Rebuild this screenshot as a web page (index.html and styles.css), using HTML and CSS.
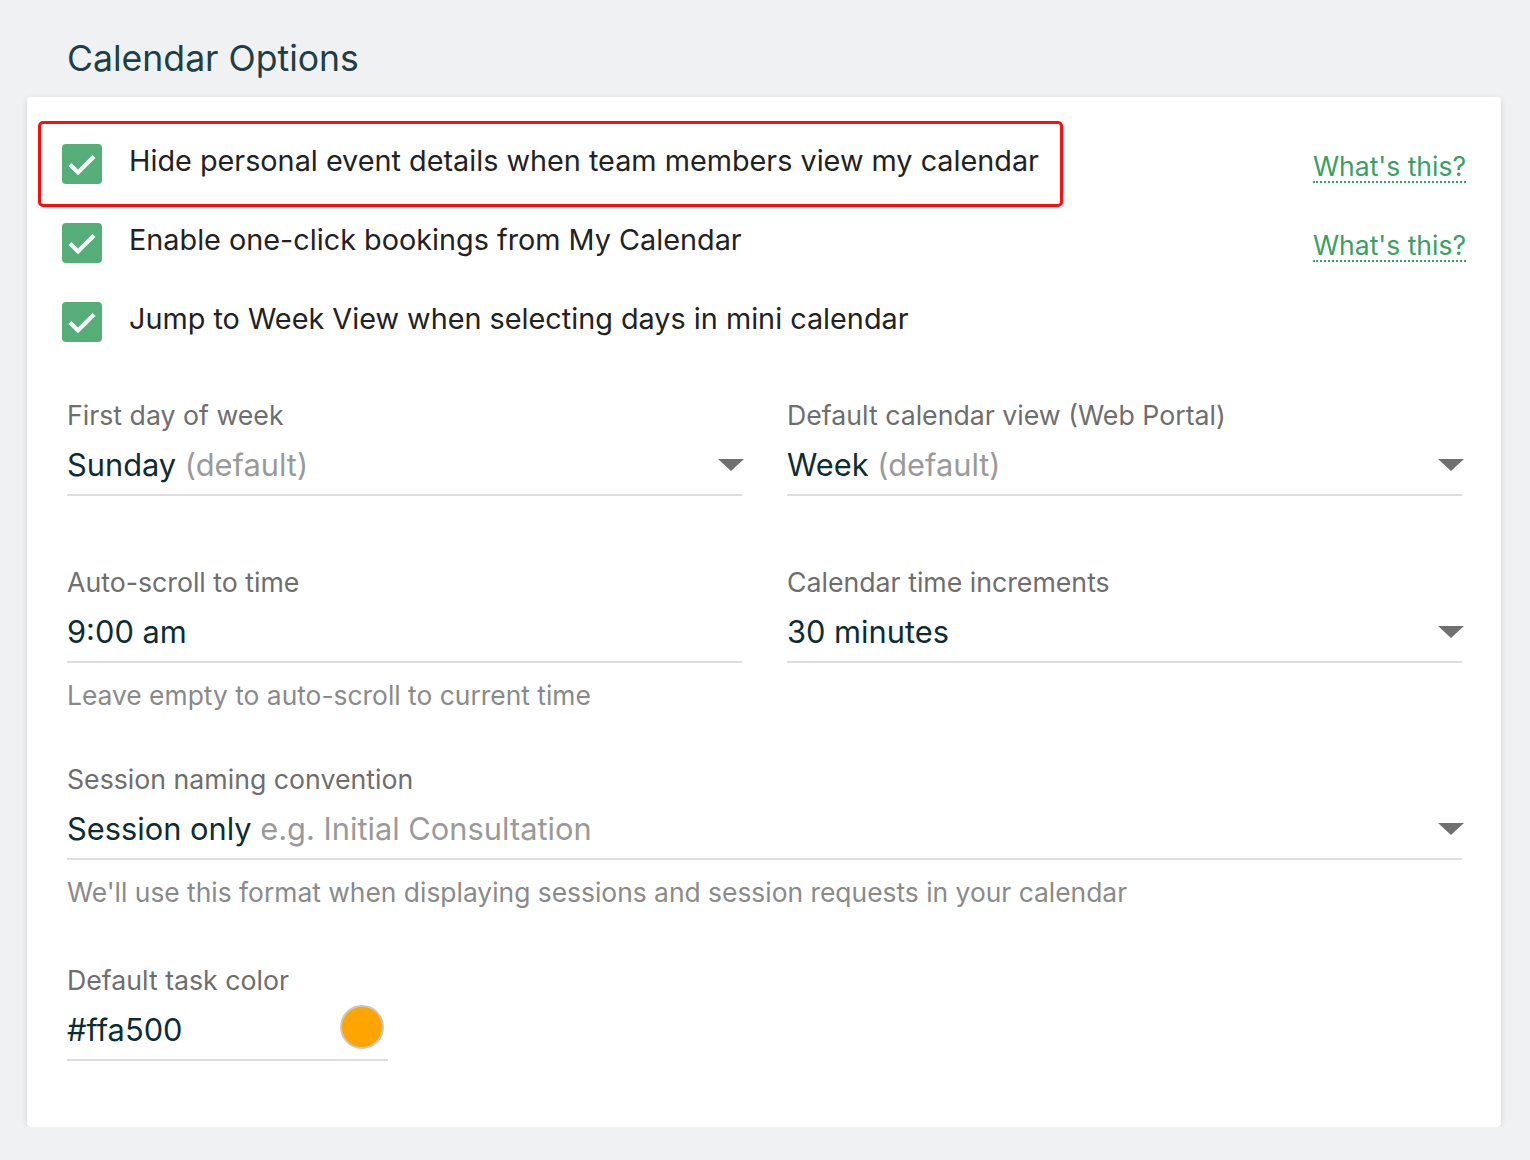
FILE: index.html
```html
<!DOCTYPE html>
<html lang="en">
<head>
    <meta charset="UTF-8">
    <meta name="viewport" content="width=device-width, initial-scale=1.0">
    <title>Calendar Options</title>
    <link rel="stylesheet" href="styles.css">
</head>
<body>
    <!-- Section title -->
    <h2 class="section-title">Calendar Options</h2>

    <div class="card">
        <!-- Checkbox options -->
        <div class="check-row">
            <label class="check-item highlight">
                <span class="checkbox">
                    <svg viewBox="0 0 40 40" width="40" height="40"><path d="M8 20.5l8 8L32 12.5" fill="none" stroke="#fff" stroke-width="4"/></svg>
                </span>
                Hide personal event details when team members view my calendar
            </label>
            <a href="#" class="whats-this">What's this?</a>
        </div>

        <div class="check-row">
            <label class="check-item">
                <span class="checkbox">
                    <svg viewBox="0 0 40 40" width="40" height="40"><path d="M8 20.5l8 8L32 12.5" fill="none" stroke="#fff" stroke-width="4"/></svg>
                </span>
                Enable one-click bookings from My Calendar
            </label>
            <a href="#" class="whats-this">What's this?</a>
        </div>

        <div class="check-row">
            <label class="check-item">
                <span class="checkbox">
                    <svg viewBox="0 0 40 40" width="40" height="40"><path d="M8 20.5l8 8L32 12.5" fill="none" stroke="#fff" stroke-width="4"/></svg>
                </span>
                Jump to Week View when selecting days in mini calendar
            </label>
        </div>

        <!-- Form fields -->
        <div class="fields">
            <div class="field-row first">
                <div class="field">
                    <div class="field-label">First day of week</div>
                    <div class="field-input">
                        <span class="value">Sunday <span class="muted">(default)</span></span>
                        <span class="caret"></span>
                    </div>
                </div>
                <div class="field">
                    <div class="field-label">Default calendar view (Web Portal)</div>
                    <div class="field-input">
                        <span class="value">Week <span class="muted">(default)</span></span>
                        <span class="caret"></span>
                    </div>
                </div>
            </div>

            <div class="field-row second">
                <div class="field">
                    <div class="field-label">Auto-scroll to time</div>
                    <div class="field-input">
                        <span class="value">9:00 am</span>
                    </div>
                    <div class="helper">Leave empty to auto-scroll to current time</div>
                </div>
                <div class="field">
                    <div class="field-label">Calendar time increments</div>
                    <div class="field-input">
                        <span class="value">30 minutes</span>
                        <span class="caret"></span>
                    </div>
                </div>
            </div>

            <div class="field-row single">
                <div class="field">
                    <div class="field-label">Session naming convention</div>
                    <div class="field-input">
                        <span class="value">Session only <span class="muted">e.g. Initial Consultation</span></span>
                        <span class="caret"></span>
                    </div>
                    <div class="helper">We'll use this format when displaying sessions and session requests in your calendar</div>
                </div>
            </div>

            <div class="field-row single last">
                <div class="field color-field">
                    <div class="field-label">Default task color</div>
                    <div class="field-input">
                        <span class="value">#ffa500</span>
                        <span class="swatch"></span>
                    </div>
                </div>
            </div>
        </div>
    </div>
</body>
</html>
```

FILE: styles.css
```css
/* Estilos generales */
* {
    margin: 0;
    padding: 0;
    box-sizing: border-box;
}

body {
    font-family: Inter, "Noto Sans", Arial, sans-serif;
    background-color: #f0f1f3;
    padding: 0 29px 0 27px;
}

/* Título de la sección */
.section-title {
    font-size: 35.6px;
    font-weight: 400;
    color: #1e3f46;
    padding: 38px 0 0 40px;
    line-height: 42px;
    height: 97px;
}

/* Tarjeta */
.card {
    background-color: #ffffff;
    border-radius: 4px;
    box-shadow: 0 2px 6px rgba(0, 0, 0, 0.12);
    padding: 27px 35px 66px 35px;
}

/* Filas con checkbox */
.check-row {
    display: flex;
    justify-content: space-between;
    align-items: center;
    height: 79px;
}

.check-item {
    display: flex;
    align-items: center;
    gap: 27px;
    font-size: 28.8px;
    line-height: 34px;
    color: #222222;
    padding: 0 21px 5px;
    height: 86px;
    margin-left: -24px;
    border: 3px solid transparent;
    border-radius: 5px;
    cursor: pointer;
}

.check-item.highlight {
    border-color: #ff0d0d;
}

.checkbox {
    width: 40px;
    height: 40px;
    border-radius: 4px;
    background-color: #55ae78;
    display: flex;
    flex-shrink: 0;
    margin-top: 5px;
}

.whats-this {
    font-size: 26.5px;
    color: #38a062;
    text-decoration: none;
    border-bottom: 2px dotted #38a062;
    line-height: 30px;
    margin-top: 7px;
}

/* Campos del formulario */
.fields {
    padding: 0 4px 0 5px;
    margin-top: 39px;
}

.field-row {
    display: grid;
    grid-template-columns: 1fr 1fr;
    column-gap: 45px;
    margin-bottom: 58px;
}

.field-row.first {
    margin-bottom: 71px;
}

.field-row.second {
    margin-bottom: 54px;
}

.field-row.single {
    grid-template-columns: 1fr;
}

.field-row.last {
    margin-bottom: 0;
}

.field-label {
    font-size: 26.7px;
    line-height: 30px;
    color: #6e6e6e;
    margin-bottom: 15px;
}

.field-input {
    display: flex;
    justify-content: space-between;
    align-items: center;
    height: 51px;
    padding-bottom: 9px;
    border-bottom: 2px solid #dedede;
}

.value {
    font-size: 30.8px;
    line-height: 40px;
    color: #0c2d34;
}

.muted {
    color: #9a9a9a;
}

.caret {
    width: 0;
    height: 0;
    border-left: 13px solid transparent;
    border-right: 13px solid transparent;
    border-top: 12px solid #707070;
    margin-right: -2px;
}

.helper {
    font-size: 26.4px;
    line-height: 30px;
    color: #8a8a8a;
    margin-top: 17px;
}

/* Color de tarea */
.color-field {
    width: 321px;
}

.swatch {
    width: 44px;
    height: 44px;
    border-radius: 50%;
    background-color: #ffa500;
    border: 2px solid #c8c8c8;
    margin-right: 4px;
    margin-top: -6px;
}
```
